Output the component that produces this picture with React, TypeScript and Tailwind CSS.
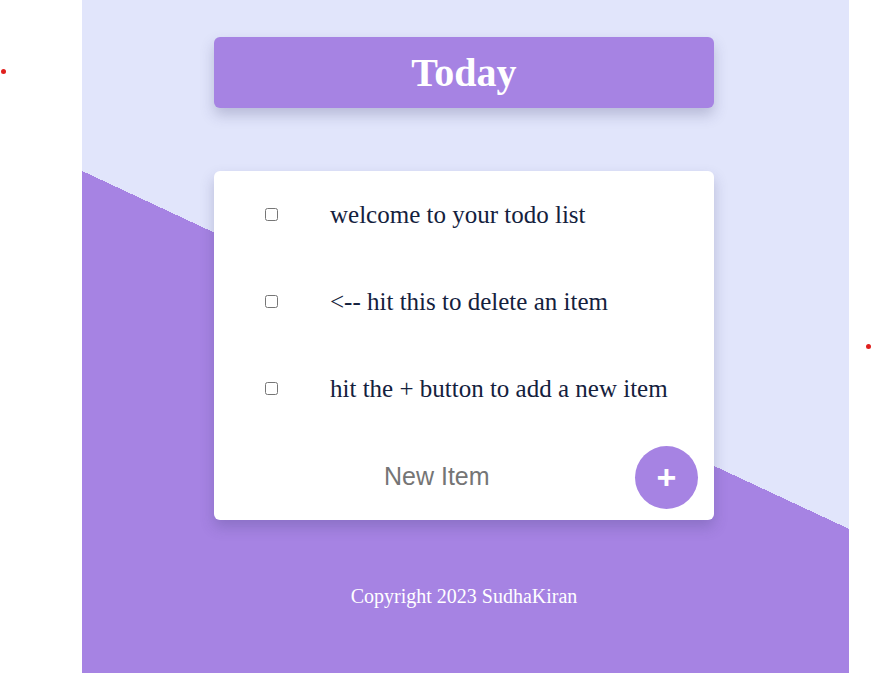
import React from "react";

interface TodoItemProps {
  text: string;
}

const items = [
  "welcome to your todo list",
  "<-- hit this to delete an item",
  "hit the + button to add a new item",
];

const TodoItem: React.FC<TodoItemProps> = ({ text }) => {
  return (
    <div className="flex items-center h-[87px]">
      <input
        type="checkbox"
        className="w-[13px] h-[13px] ml-[51px] mr-[52px] m-0"
      />
      <p className="text-[25px] text-[#14213d]">{text}</p>
    </div>
  );
};

const App = () => {
  return (
    <div className="relative min-h-screen bg-white font-['Liberation_Serif',serif]">
      {/* stray markers */}
      <span className="absolute left-[1px] top-[69px] w-[5px] h-[5px] rounded-full bg-[#e0201e]" />
      <span className="absolute left-[866px] top-[344px] w-[5px] h-[5px] rounded-full bg-[#e0201e]" />

      <main className="ml-[82px] w-[767px] h-[673px] flex flex-col items-start bg-[linear-gradient(205.02deg,#e1e5fb_51.3%,#a683e3_51.3%)]">
        {/* heading */}
        <div className="ml-[132px] mt-[37px] w-[500px] h-[71px] flex items-center justify-center rounded-md bg-[#a683e3] shadow-[0_7px_14px_rgba(60,60,110,0.25)]">
          <h1 className="text-[40px] font-bold text-white leading-none">Today</h1>
        </div>

        {/* list */}
        <div className="ml-[132px] mt-[63px] w-[500px] h-[349px] flex flex-col rounded-md bg-white shadow-[0_7px_14px_rgba(60,60,110,0.25)]">
          {items.map((item, idx) => (
            <TodoItem key={idx} text={item} />
          ))}
          <form className="flex items-center h-[88px] pt-[2px]" onSubmit={(e) => e.preventDefault()}>
            <input
              type="text"
              placeholder="New Item"
              className="ml-[170px] w-[201px] text-[25px] font-['Liberation_Sans',sans-serif] outline-none placeholder:text-[#757575]"
            />
            <button
              type="submit"
              className="ml-[50px] w-[63px] h-[63px] rounded-full bg-[#a683e3] text-white text-[34px] font-bold font-['Liberation_Sans',sans-serif] flex items-center justify-center leading-none"
            >
              +
            </button>
          </form>
        </div>

        <footer className="mt-[61px] w-[500px] ml-[132px] text-center">
          <p className="text-[20px] text-white">Copyright 2023 SudhaKiran</p>
        </footer>
      </main>
    </div>
  );
};

export default App;
